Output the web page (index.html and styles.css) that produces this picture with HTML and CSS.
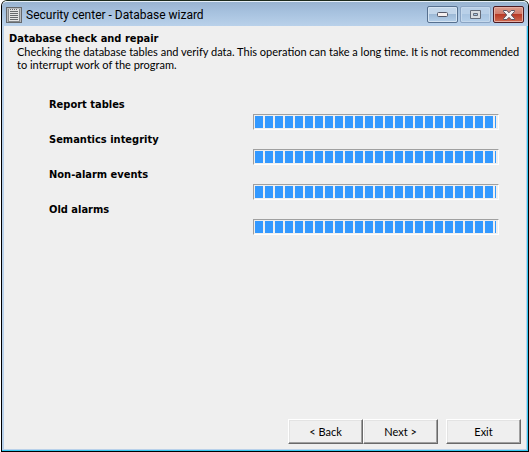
FILE: index.html
```html
<!DOCTYPE html>
<html lang="en">
<head>
<meta charset="utf-8">
<title>Security center - Database wizard</title>
<link rel="stylesheet" href="styles.css">
</head>
<body>
<div class="window">
  <header class="titlebar">
    <svg class="app-icon" width="16" height="16" viewBox="0 0 16 16" shape-rendering="crispEdges" aria-hidden="true">
      <rect width="16" height="16" fill="#66696c"/>
      <rect x="1" y="1" width="14" height="14" fill="#b9bbbd"/>
      <rect x="3" y="2" width="10" height="12" fill="#e4e4e4"/>
      <path d="M4 2h1v1h-1zM6 2h1v1h-1zM8 2h1v1h-1zM10 2h1v1h-1zM4 4h8v1H4zM4 6h8v1H4zM4 8h8v1H4zM4 10h8v1H4zM4 12h8v1H4z" fill="#66696c"/>
      <path d="M2 2h1v12H2zM13 2h1v12h-1zM2 14h12v1H2z" fill="#85888b"/>
    </svg>
    <h1 class="title">Security center - Database wizard</h1>
    <div class="controls">
      <button class="control" type="button" aria-label="Minimize">
        <svg width="11" height="5" viewBox="0 0 11 5"><rect x=".5" y=".5" width="10" height="4" rx="1" fill="#f5efef" stroke="#535666"/></svg>
      </button>
      <button class="control dim" type="button" aria-label="Maximize">
        <svg width="11" height="9" viewBox="0 0 11 9"><path d="M.5.5h10v8H.5zM3.500 3.500v2h4v-2z" fill="#d9dce0" fill-rule="evenodd" stroke="#646b78"/></svg>
      </button>
      <button class="control close" type="button" aria-label="Close">
        <svg width="12" height="10" viewBox="0 0 12 10"><path d="M.5.5h3.300L6 2.700 8.200.5h3.300v1L8.300 5l3.200 3.500v1H8.200L6 7.300 3.800 9.500H.5v-1L3.700 5 .5 1.500z" fill="#f4f1f1" stroke="#5a5461"/></svg>
      </button>
    </div>
  </header>
  <main class="content">
    <h2 class="heading">Database check and repair</h2>
    <p class="description">Checking the database tables and verify data. This operation can take a long time. It is not recommended to interrupt work of the program.</p>
    <div class="tasks">
      <div class="task">
        <label for="report">Report tables</label>
        <progress id="report" value="100" max="100"></progress>
      </div>
      <div class="task">
        <label for="semantics">Semantics integrity</label>
        <progress id="semantics" value="100" max="100"></progress>
      </div>
      <div class="task">
        <label for="events">Non-alarm events</label>
        <progress id="events" value="100" max="100"></progress>
      </div>
      <div class="task">
        <label for="alarms">Old alarms</label>
        <progress id="alarms" value="100" max="100"></progress>
      </div>
    </div>
  </main>
  <footer class="actions">
    <div class="steps">
      <button class="button" type="button">&lt; Back</button>
      <button class="button" type="button">Next &gt;</button>
    </div>
    <button class="button" type="button">Exit</button>
  </footer>
</div>
</body>
</html>
```
FILE: styles.css
```css
* {
  box-sizing: border-box;
}

body {
  margin: 0;
  background: #fff;
  color: #000;
  font: 11px/13px Lato, "Liberation Sans", Arial, sans-serif;
}

h1, h2, p {
  margin: 0;
}

.window {
  display: flex;
  flex-direction: column;
  min-height: 100vh;
  margin-left: 1px;
  border: 1px solid #000;
  border-top-color: #1c2a1c;
  border-radius: 6px 6px 0 0;
  background: #efefef;
  box-shadow: inset -1px -1px #35c8f0, inset 2px -2px #b9d1ea, inset -2px 0 #b9d1ea;
}

.titlebar {
  display: flex;
  align-items: center;
  gap: 4px;
  height: 25px;
  padding: 1px 4px 0 4px;
  border-top: 1px solid #e6f0f8;
  border-radius: 5px 5px 0 0;
  background: linear-gradient(#99b4d1, #a6c1de 40%, #b9d1ea);
}

.title {
  flex: 1;
  font: 12px/16px Roboto, "Segoe UI", sans-serif;
  white-space: nowrap;
}

.controls {
  display: flex;
  gap: 2px;
}

.control {
  display: flex;
  align-items: center;
  justify-content: center;
  width: 31px;
  height: 17px;
  padding: 0;
  border: 1px solid #56708f;
  border-radius: 2px;
  background: linear-gradient(#c3d6ea 50%, #9db9d6 50%, #b5cfe9);
  box-shadow: inset 0 0 0 1px #d5e4f2;
}

.dim {
  border-color: #8ba5c4;
  background: linear-gradient(#b9d0e8 50%, #a9c5e1 50%, #b5cfe9);
  box-shadow: inset 0 0 0 1px #c4d8ec;
}

.close {
  border-color: #4c1a22;
  background: linear-gradient(#dc9c8d, #cf796a 50%, #b83a26 50%, #cf6a50);
  box-shadow: inset 0 0 0 1px #e5aea3;
}

.content {
  flex: 1;
  padding: 6px 7px 0;
}

.heading,
.task label {
  font: bold 11px/13px "DejaVu Sans Condensed", Tahoma, sans-serif;
}

.description {
  padding-left: 8px;
}

.tasks {
  padding: 27px 22px 0 40px;
}

.task {
  display: flex;
  flex-direction: column;
  gap: 2px;
  height: 35px;
}

.task label {
  line-height: 14px;
}

progress {
  appearance: none;
  align-self: flex-end;
  width: 246px;
  height: 16px;
  padding: 1px 2px 1px 1px;
  border: 1px solid #fff;
  border-top-color: #a0a0a0;
  border-left-color: #a0a0a0;
  background: #efefef;
}

progress::-webkit-progress-bar {
  background: #efefef;
}

progress::-webkit-progress-value {
  background: repeating-linear-gradient(90deg, #3399ff 0 8px, #efefef 8px 10px);
}

.actions {
  display: flex;
  justify-content: flex-end;
  gap: 8px;
  padding: 0 7px 7px;
}

.steps {
  display: flex;
}

.button {
  width: 75px;
  height: 25px;
  padding: 0;
  border: 1px solid #fff;
  border-right-color: #696969;
  border-bottom-color: #696969;
  background: #efefef;
  box-shadow: inset -1px -1px #a0a0a0, inset 1px 1px #e3e3e3;
  color: #000;
  font: inherit;
}
```
